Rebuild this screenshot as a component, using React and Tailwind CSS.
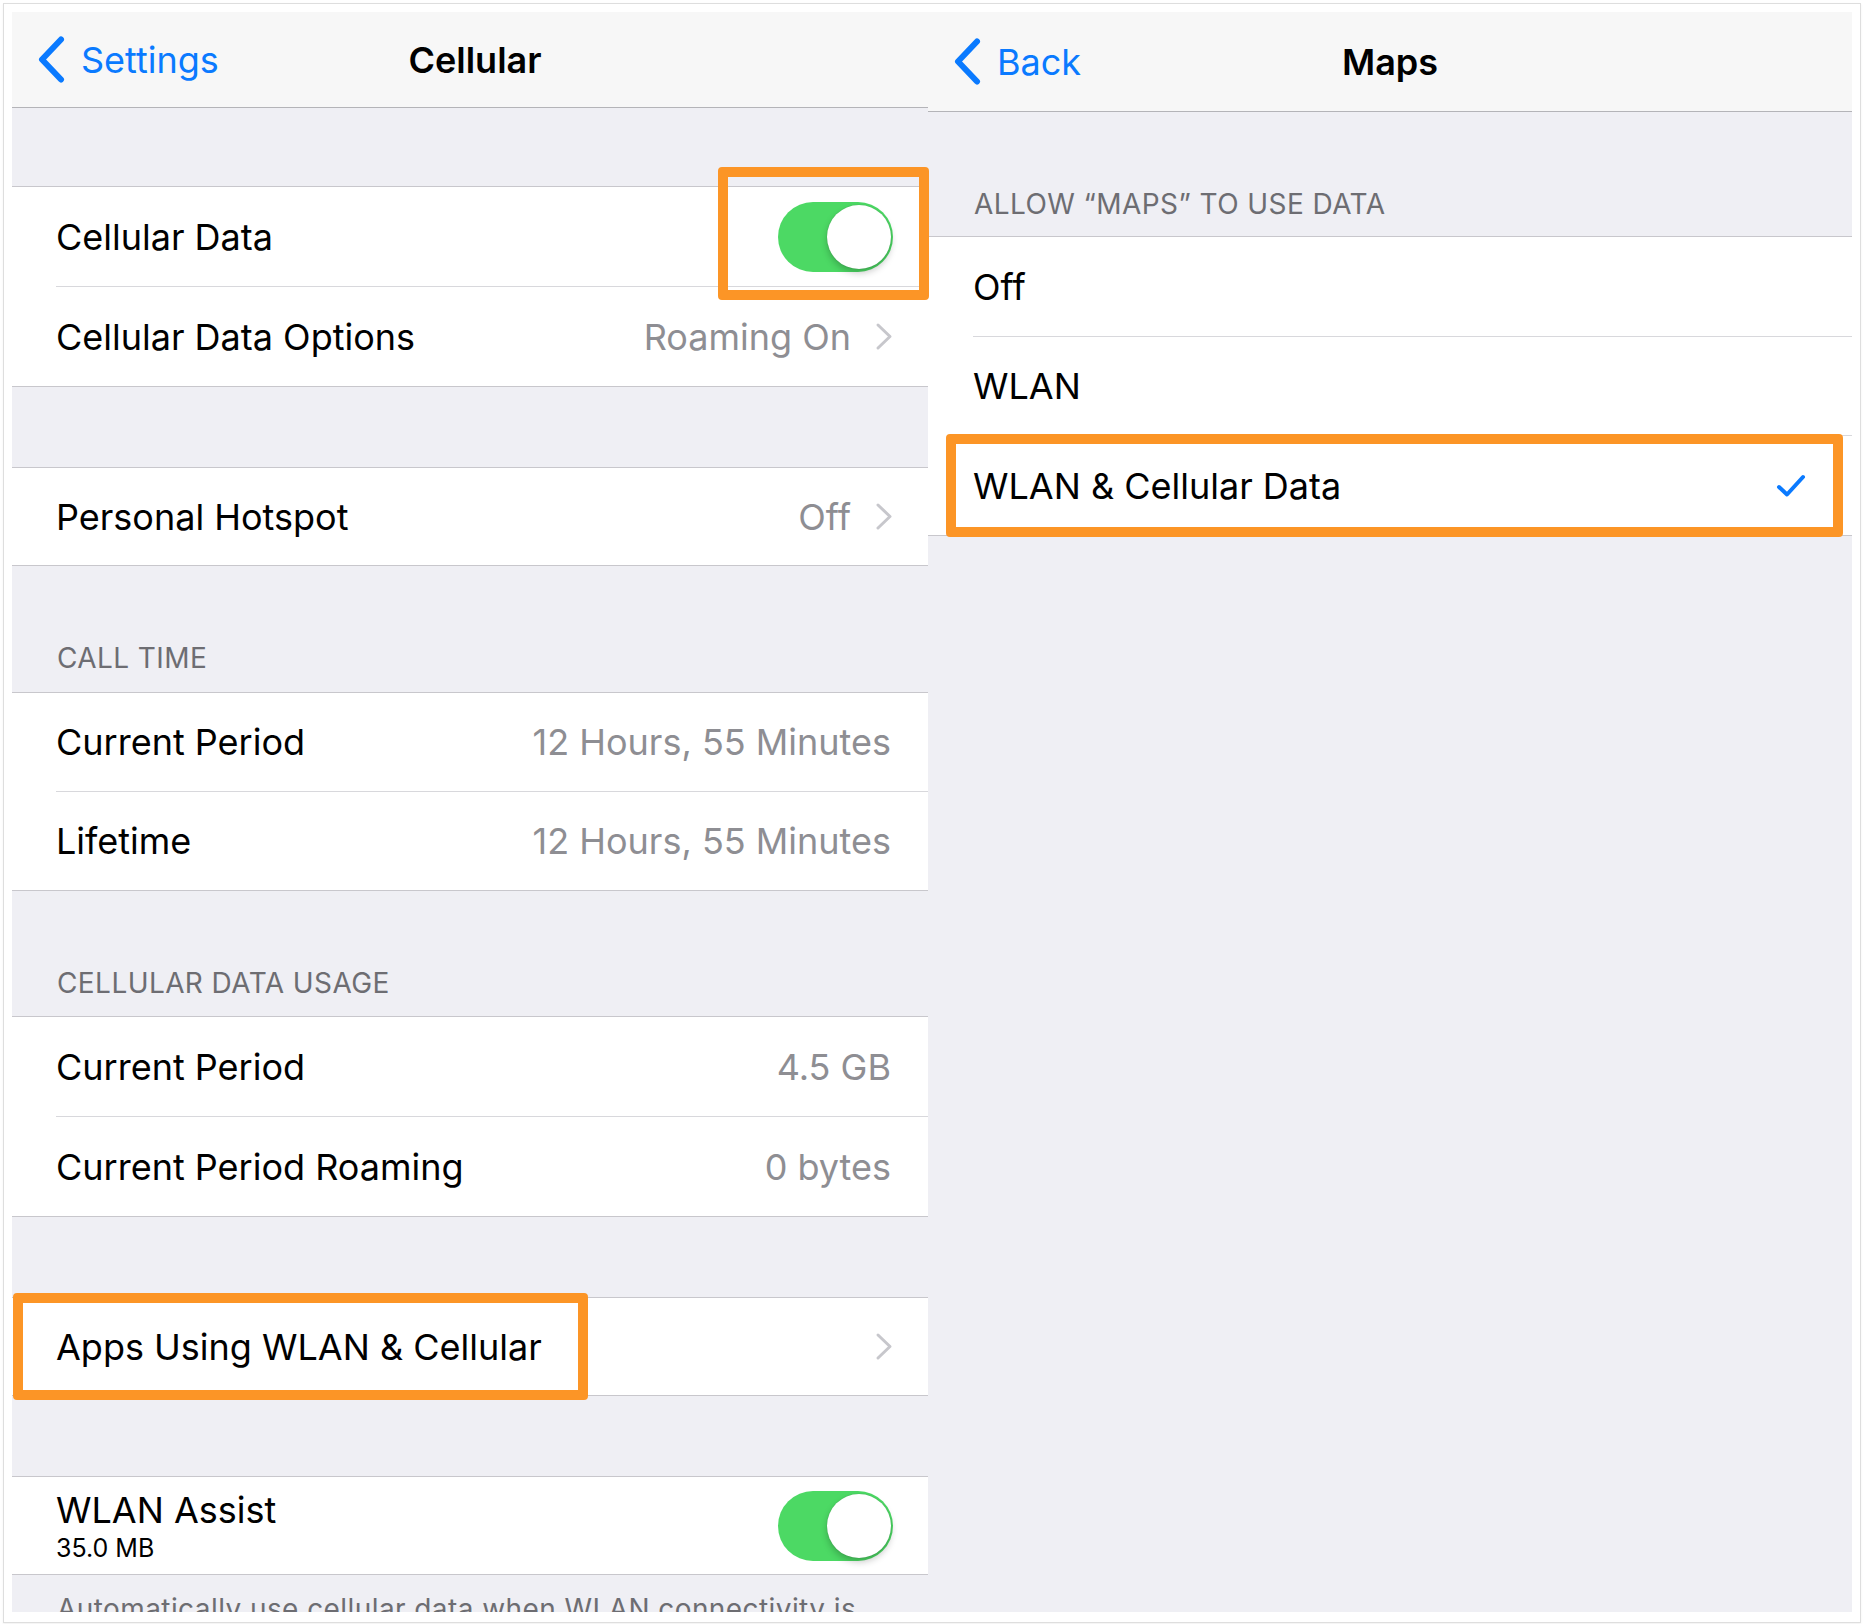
import React from "react";

const Chevron = () => (
  <svg width="18" height="29" viewBox="0 0 18 29" className="shrink-0">
    <path d="M3 3 L15 14.5 L3 26" fill="none" stroke="#c7c7cc" strokeWidth="3" strokeLinecap="round" strokeLinejoin="round" />
  </svg>
);

const BackChevron = () => (
  <svg width="28" height="47" viewBox="0 0 28 47" className="shrink-0">
    <path d="M24 3.5 L5 23.5 L24 43.5" fill="none" stroke="#0a7aff" strokeWidth="6" strokeLinecap="round" strokeLinejoin="round" />
  </svg>
);

const Check = () => (
  <svg width="30" height="24" viewBox="0 0 30 24" className="shrink-0">
    <path d="M3 13 L11 20.5 L27 3" fill="none" stroke="#0a7aff" strokeWidth="4" strokeLinecap="round" strokeLinejoin="round" />
  </svg>
);

const Toggle = () => (
  <div className="w-[115px] h-[70px] rounded-full bg-[#4cd964] flex items-center justify-end pr-[2px] shrink-0">
    <div className="w-[64px] h-[64px] rounded-full bg-white shadow-[0_4px_7px_rgba(0,0,0,0.22),0_0_1px_rgba(0,0,0,0.25)]" />
  </div>
);

// one white cell of a settings list
function Row({ hClass, label, sub, value, chevron, sep, right }) {
  return (
    <div className={`${hClass} bg-white pl-[44px] flex`}>
      <div
        className={`flex-1 flex items-center justify-between ${chevron || right ? "pr-[35px]" : "pr-[37px]"} ${
          sep ? "border-b border-[#d8d8dc]" : ""
        }`}
      >
        {sub ? (
          <div className="flex flex-col gap-[8px] pt-[2px]">
            <span className="text-[36px] leading-none text-black">{label}</span>
            <span className="text-[25px] leading-none text-black">{sub}</span>
          </div>
        ) : (
          <span className="text-[36px] leading-none text-black">{label}</span>
        )}
        <div className="flex items-center gap-[24px]">
          {value && <span className="text-[36px] leading-none text-[#8e8e93]">{value}</span>}
          {chevron && <Chevron />}
          {right}
        </div>
      </div>
    </div>
  );
}

const Header = ({ hClass, pbClass, pl, text }) => (
  <div className={`${hClass} ${pbClass} ${pl} flex items-end`}>
    <span className="text-[28px] leading-none tracking-[0.015em] text-[#6d6d72] uppercase">{text}</span>
  </div>
);

function NavBar({ hClass, back, title }) {
  return (
    <div className={`${hClass} bg-[#f7f7f7] border-b border-[#b4b4b8] grid grid-cols-[1fr_auto_1fr] items-center`}>
      <div className="flex items-center pl-[25px]">
        <BackChevron />
        <span className="ml-[16px] text-[36px] leading-none text-[#0a7aff]">{back}</span>
      </div>
      <span className="text-[36px] leading-none font-semibold text-black">{title}</span>
      <div />
    </div>
  );
}

const Orange = ({ pos }) => (
  <div className={`absolute z-10 ${pos} border-[10px] border-[#fc9526] rounded-[4px] pointer-events-none`} />
);

export default function App() {
  return (
    <div className="w-[1865px] h-[1624px] bg-white pt-[3px] pl-[3px] font-['Inter',sans-serif] antialiased">
      <div className="w-[1858px] h-[1620px] border border-[#dedede] pt-[8px] px-[8px] pb-[10px] flex shadow-[0_1px_2px_rgba(0,0,0,0.06)]">
        {/* left: Cellular */}
        <div className="relative w-[916px] h-full flex flex-col bg-[#efeff4]">
          <NavBar hClass="h-[96px]" back="Settings" title={<span className="pl-[10px]">Cellular</span>} />
          <div className="h-[78px]" />
          <div className="border-y border-[#c8c7cc]">
            <Row hClass="h-[100px]" label="Cellular Data" sep right={<Toggle />} />
            <Row hClass="h-[99px]" label="Cellular Data Options" value="Roaming On" chevron />
          </div>
          <div className="h-[80px]" />
          <div className="border-y border-[#c8c7cc]">
            <Row hClass="h-[97px]" label="Personal Hotspot" value="Off" chevron />
          </div>
          <Header hClass="h-[126px]" pbClass="pb-[20px]" pl="pl-[45px]" text="Call Time" />
          <div className="border-y border-[#c8c7cc]">
            <Row hClass="h-[99px]" label="Current Period" value="12 Hours, 55 Minutes" sep />
            <Row hClass="h-[98px]" label="Lifetime" value="12 Hours, 55 Minutes" />
          </div>
          <Header hClass="h-[125px]" pbClass="pb-[19px]" pl="pl-[45px]" text="Cellular Data Usage" />
          <div className="border-y border-[#c8c7cc]">
            <Row hClass="h-[100px]" label="Current Period" value="4.5 GB" sep />
            <Row hClass="h-[99px]" label="Current Period Roaming" value="0 bytes" />
          </div>
          <div className="h-[80px]" />
          <div className="border-y border-[#c8c7cc]">
            <Row hClass="h-[97px]" label="Apps Using WLAN & Cellular" chevron />
          </div>
          <div className="h-[80px]" />
          <div className="border-y border-[#c8c7cc]">
            <Row hClass="h-[97px]" label="WLAN Assist" sub="35.0 MB" right={<Toggle />} />
          </div>
          <div className="flex-1 overflow-hidden pl-[45px] pt-[20px]">
            <p className="text-[28px] leading-none tracking-[0.015em] text-[#6d6d72] whitespace-nowrap">
              Automatically use cellular data when WLAN connectivity is
            </p>
          </div>

          <Orange pos="left-[706px] top-[155px] w-[211px] h-[133px]" />
          <Orange pos="left-[1px] top-[1281px] w-[575px] h-[107px]" />
        </div>

        {/* right: Maps */}
        <div className="relative flex-1 h-full flex flex-col bg-[#efeff4]">
          <NavBar hClass="h-[100px]" back="Back" title="Maps" />
          <Header hClass="h-[124px]" pbClass="pb-[18px]" pl="pl-[46px]" text="Allow “Maps” to Use Data" />
          <div className="border-y border-[#c8c7cc]">
            <div className="h-[100px] bg-white pl-[45px] flex">
              <div className="flex-1 flex items-center border-b border-[#d8d8dc]">
                <span className="text-[36px] leading-none text-black">Off</span>
              </div>
            </div>
            <div className="h-[99px] bg-white pl-[45px] flex">
              <div className="flex-1 flex items-center border-b border-[#d8d8dc]">
                <span className="text-[36px] leading-none text-black">WLAN</span>
              </div>
            </div>
            <div className="h-[99px] bg-white pl-[45px] pr-[46px] flex items-center justify-between">
              <span className="text-[36px] leading-none text-black">WLAN &amp; Cellular Data</span>
              <Check />
            </div>
          </div>
          <div className="flex-1" />

          <Orange pos="left-[18px] top-[422px] w-[897px] h-[103px]" />
        </div>
      </div>
    </div>
  );
}
